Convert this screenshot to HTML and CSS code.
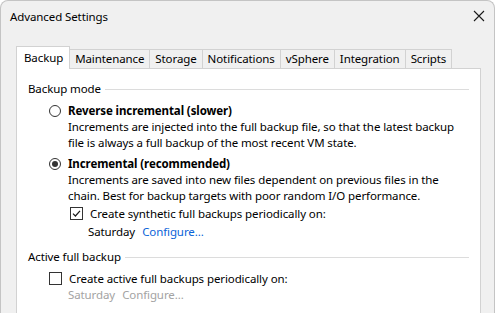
FILE: index.html
```html
<!DOCTYPE html>
<html>
<head>
<meta charset="utf-8">
<link rel="stylesheet" href="styles.css">
</head>
<body>
<div class="window">
  <div class="titlebar">
    <span class="title">Advanced Settings</span>
    <svg class="close" width="12" height="12" viewBox="0 0 12 12"><path d="M1 1 L11 11 M11 1 L1 11" stroke="#1a1a1a" stroke-width="1.1" fill="none"/></svg>
  </div>
  <div class="content">
    <div class="tabs">
      <div class="tab active">Backup</div>
      <div class="tab">Maintenance</div>
      <div class="tab">Storage</div>
      <div class="tab">Notifications</div>
      <div class="tab">vSphere</div>
      <div class="tab">Integration</div>
      <div class="tab">Scripts</div>
    </div>
    <div class="panel">
      <div class="group-head"><span>Backup mode</span><span class="rule"></span></div>
      <div class="option first">
        <span class="radio"></span>
        <span class="opt-label">Reverse incremental (slower)</span>
      </div>
      <div class="desc">Increments are injected into the full backup file, so that the latest backup<br>file is always a full backup of the most recent VM state.</div>
      <div class="option second">
        <span class="radio checked"></span>
        <span class="opt-label">Incremental (recommended)</span>
      </div>
      <div class="desc">Increments are saved into new files dependent on previous files in the<br>chain. Best for backup targets with poor random I/O performance.</div>
      <div class="check-row sub">
        <span class="checkbox checked"><svg width="11" height="11" viewBox="0 0 11 11"><path d="M2 5.6 L4.4 8 L9 2.8" stroke="#1a1a1a" stroke-width="1.2" fill="none"/></svg></span>
        <span>Create synthetic full backups periodically on:</span>
      </div>
      <div class="sched sub2"><span>Saturday</span><a class="link">Configure...</a></div>
      <div class="group-head second-group"><span>Active full backup</span><span class="rule"></span></div>
      <div class="check-row">
        <span class="checkbox"></span>
        <span>Create active full backups periodically on:</span>
      </div>
      <div class="sched disabled indent"><span>Saturday</span><span>Configure...</span></div>
    </div>
  </div>
</div>
</body>
</html>
```
FILE: styles.css
```css
* { box-sizing: border-box; }
html, body { margin: 0; padding: 0; background: #ffffff; }
body {
  font-family: "Noto Sans", "Open Sans", sans-serif;
  font-size: 11.5px;
  letter-spacing: -0.1px;
  color: #000;
  width: 496px;
  height: 313px;
  overflow: hidden;
}
.window {
  width: 495px;
  height: 313px;
  background: #f0f0f0;
  border: 1px solid #c4c4c4;
  border-bottom: none;
  border-radius: 8px 8px 0 0;
  display: flex;
  flex-direction: column;
  overflow: hidden;
}
.titlebar {
  height: 30px;
  flex: none;
  display: flex;
  align-items: center;
  justify-content: space-between;
  padding: 0 9px 0 9px;
}
.title { line-height: 16px; margin-top: 1px; }
.content {
  flex: 1;
  display: flex;
  flex-direction: column;
  padding: 15px 0 0 15px;
}
.tabs {
  display: flex;
  align-items: flex-end;
  height: 22px;
  flex: none;
  position: relative;
  z-index: 1;
}
.tab {
  height: 19px;
  line-height: 17px;
  padding: 0 5px;
  border: 1px solid #d2d2d2;
  border-bottom: none;
  border-left: none;
  background: #f0f0f0;
  white-space: nowrap;
}
.tab.active {
  height: 23px;
  margin-bottom: -1px;
  line-height: 22px;
  background: #fff;
  border-left: 1px solid #d2d2d2;
  padding: 0 6px 0 7px;
}
.panel {
  width: 465px;
  flex: 1;
  background: #fff;
  border: 1px solid #d2d2d2;
  border-bottom: none;
  padding: 12px 11px 0 11px;
}
.group-head {
  display: flex;
  align-items: center;
  height: 16px;
  line-height: 16px;
  gap: 4px;
}
.group-head .rule {
  flex: 1;
  height: 1px;
  background: #dcdcdc;
}
.option {
  display: flex;
  align-items: center;
  height: 17px;
  padding-left: 21px;
  gap: 7px;
  font-weight: bold;
}
.option.first { margin-top: 5px; }
.option.second { margin-top: 4px; }
.radio {
  width: 12px;
  height: 12px;
  border: 1px solid #333;
  border-radius: 50%;
  display: flex;
  align-items: center;
  justify-content: center;
}
.radio.checked::after {
  content: "";
  width: 6px;
  height: 6px;
  border-radius: 50%;
  background: #333;
}
.desc {
  padding-left: 40px;
  line-height: 16px;
  white-space: nowrap;
}
.check-row {
  display: flex;
  align-items: center;
  height: 16px;
  padding-left: 21px;
  gap: 7px;
  margin-top: 5px;
  white-space: nowrap;
}
.check-row.sub { padding-left: 42px; margin-top: 1px; }
.checkbox {
  width: 13px;
  height: 13px;
  border: 1px solid #333;
  display: flex;
  align-items: center;
  justify-content: center;
}
.sched {
  display: flex;
  gap: 7px;
  height: 16px;
  line-height: 16px;
  margin-top: 3px;
}
.sched.sub2 { padding-left: 60px; }
.sched.indent { padding-left: 40px; margin-top: 1px; }
.link { color: #0a63d8; }
.disabled { color: #a3a3a3; }
.second-group { margin-top: 9px; }
```
